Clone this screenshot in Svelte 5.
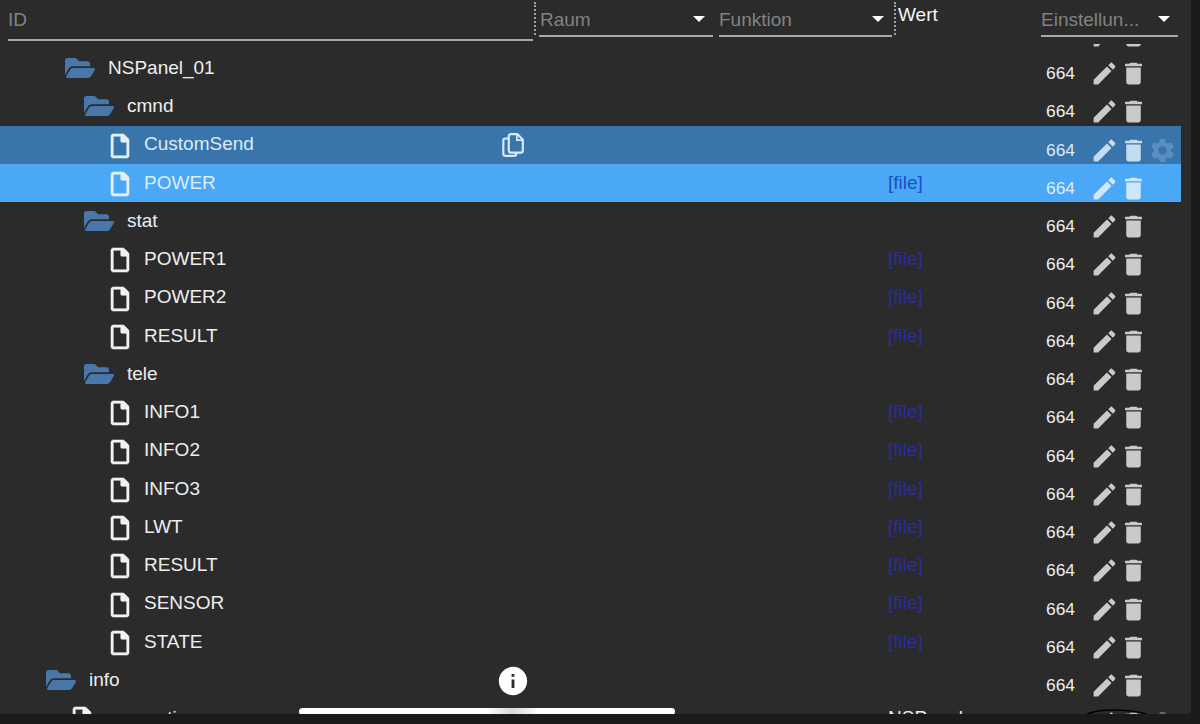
<script lang="ts">
  type Row = { name: string; kind: 'folder' | 'file'; depth: number; value?: string; tone?: string; gear?: boolean; copy?: boolean }

  const rows: Row[] = [
    { name: '', kind: 'folder', depth: 0 },
    { name: 'NSPanel_01', kind: 'folder', depth: 1 },
    { name: 'cmnd', kind: 'folder', depth: 2 },
    { name: 'CustomSend', kind: 'file', depth: 2, tone: 'hover', gear: true, copy: true },
    { name: 'POWER', kind: 'file', depth: 2, value: '[file]', tone: 'selected' },
    { name: 'stat', kind: 'folder', depth: 2 },
    { name: 'POWER1', kind: 'file', depth: 2, value: '[file]' },
    { name: 'POWER2', kind: 'file', depth: 2, value: '[file]' },
    { name: 'RESULT', kind: 'file', depth: 2, value: '[file]' },
    { name: 'tele', kind: 'folder', depth: 2 },
    { name: 'INFO1', kind: 'file', depth: 2, value: '[file]' },
    { name: 'INFO2', kind: 'file', depth: 2, value: '[file]' },
    { name: 'INFO3', kind: 'file', depth: 2, value: '[file]' },
    { name: 'LWT', kind: 'file', depth: 2, value: '[file]' },
    { name: 'RESULT', kind: 'file', depth: 2, value: '[file]' },
    { name: 'SENSOR', kind: 'file', depth: 2, value: '[file]' },
    { name: 'STATE', kind: 'file', depth: 2, value: '[file]' },
    { name: 'info', kind: 'folder', depth: 0 },
    { name: 'connection', kind: 'file', depth: 0, value: 'NSPanel', gear: true }
  ]

  const indent = (row: Row): number => (row.kind === 'folder' ? 46 : 72) + row.depth * 19
</script>

<div class="page">
  <header class="head">
    <div class="filter id-filter">ID</div>
    <span class="splitter"></span>
    <div class="filter select raum">Raum<i class="caret"></i></div>
    <div class="filter select funktion">Funktion<i class="caret"></i></div>
    <span class="splitter second"></span>
    <div class="wert">Wert</div>
    <div class="filter select settings-filter">Einstellun...<i class="caret"></i></div>
  </header>

  <div class="viewport">
    <div class="list">
      {#each rows as row}
        <div class="row {row.tone ?? ''}">
          <div class="name" style="padding-left: {indent(row)}px">
            {#if row.kind === 'folder'}
              <svg class="folder" viewBox="0 0 576 512">
                <path d="M572.694 292.093L500.27 416.248A63.997 63.997 0 0 1 444.989 448H45.025c-18.523 0-30.064-20.093-20.731-36.093l72.424-124.155A64 64 0 0 1 152 256h399.964c18.523 0 30.064 20.093 20.73 36.093zM152 224h328v-48c0-26.51-21.49-48-48-48H272l-64-64H48C21.49 64 0 85.49 0 112v278.046l69.077-118.418C86.214 242.25 117.989 224 152 224z" />
              </svg>
            {:else}
              <svg class="file" viewBox="0 0 384 512">
                <path d="M369.9 97.9L286 14C277 5 264.8-.1 252.1-.1H48C21.5 0 0 21.5 0 48v416c0 26.5 21.5 48 48 48h288c26.5 0 48-21.5 48-48V131.9c0-12.7-5.1-25-14.1-34zM332.1 128H256V51.9l76.1 76.1zM48 464V48h160v104c0 13.3 10.7 24 24 24h104v288H48z" />
                <path d="M250 40L344 134H250z" />
              </svg>
            {/if}
            <span class="label">{row.name}</span>
            {#if row.copy}
              <svg class="copy" viewBox="0 0 24 24" fill="none" stroke="currentColor" stroke-width="2">
                <path d="M9 17V4a2 2 0 0 1 2-2h6l5 5v10a2 2 0 0 1-2 2h-9a2 2 0 0 1-2-2z" />
                <path d="M16.5 2.5V7.5H21.5" stroke-width="1.6" />
                <path d="M9 6H6a2 2 0 0 0-2 2v12a2 2 0 0 0 2 2h8a2 2 0 0 0 2-2v-1" />
              </svg>
            {/if}
          </div>
          <div class="value" class:plain={row.value === 'NSPanel'}>{row.value ?? ''}</div>
          <div class="actions">
            <span class="num">{row.name ? '664' : ''}</span>
            <svg class="act" viewBox="0 0 24 24">
              <path d="M3 17.25V21h3.75L17.81 9.94l-3.75-3.75L3 17.25zM20.71 7.04c.39-.39.39-1.02 0-1.41l-2.34-2.34c-.39-.39-1.02-.39-1.41 0l-1.83 1.83 3.75 3.75 1.83-1.83z" />
            </svg>
            <svg class="act" viewBox="0 0 24 24">
              <path d="M6 19c0 1.1.9 2 2 2h8c1.1 0 2-.9 2-2V7H6v12zM19 4h-3.5l-1-1h-5l-1 1H5v2h14V4z" />
            </svg>
            {#if row.gear}
              <svg class="act gear" viewBox="0 0 24 24">
                <path d="M19.14 12.94c.04-.3.06-.61.06-.94 0-.32-.02-.64-.07-.94l2.03-1.58c.18-.14.23-.41.12-.61l-1.92-3.32c-.12-.22-.37-.29-.59-.22l-2.39.96c-.5-.38-1.03-.7-1.62-.94l-.36-2.54c-.04-.24-.24-.41-.48-.41h-3.84c-.24 0-.43.17-.47.41l-.36 2.54c-.59.24-1.13.57-1.62.94l-2.39-.96c-.22-.08-.47 0-.59.22L2.74 8.87c-.12.21-.08.47.12.61l2.03 1.58c-.05.3-.09.63-.09.94s.02.64.07.94l-2.03 1.58c-.18.14-.23.41-.12.61l1.92 3.32c.12.22.37.29.59.22l2.39-.96c.5.38 1.03.7 1.62.94l.36 2.54c.05.24.24.41.48.41h3.84c.24 0 .44-.17.47-.41l.36-2.54c.59-.24 1.13-.56 1.62-.94l2.39.96c.22.08.47 0 .59-.22l1.92-3.32c.12-.22.07-.47-.12-.61l-2.01-1.58zM12 15.6c-1.98 0-3.6-1.62-3.6-3.6s1.62-3.6 3.6-3.6 3.6 1.62 3.6 3.6-1.62 3.6-3.6 3.6z" />
              </svg>
            {/if}
          </div>
        </div>
      {/each}
    </div>
  </div>

  <svg class="info" viewBox="0 0 24 24">
    <path d="M12 2C6.48 2 2 6.48 2 12s4.48 10 10 10 10-4.48 10-10S17.52 2 12 2zm1 15h-2v-6h2v6zm0-8h-2V7h2v2z" />
  </svg>
  <div class="home-bar"></div>
  <svg class="arc" viewBox="0 0 80 16" fill="none">
    <path d="M1 16C10 5 22 2 38 2C50 2 62 3 72 6" stroke="#000" stroke-width="1.6" />
  </svg>
</div>

<style>
  :global(body) {
    background: #1b1b1b;
    overflow: hidden;
  }
  .page {
    position: relative;
    display: flex;
    flex-direction: column;
    width: 1191px;
    height: 714px;
    background: #2b2b2b;
    border-bottom-right-radius: 4px;
    font-family: "Liberation Sans", Arial, sans-serif;
    font-size: 19px;
    color: #eeeeee;
  }
  .head {
    display: flex;
    flex: none;
    height: 44px;
    box-sizing: border-box;
    padding-left: 8px;
  }
  .filter {
    box-sizing: border-box;
    color: #828282;
    line-height: 22px;
    padding-top: 9px;
  }
  .id-filter {
    width: 525px;
    height: 41px;
    border-bottom: 2px solid #a8a8a8;
  }
  .splitter {
    flex: none;
    width: 0;
    height: 33px;
    margin: 2px 2px 0 0.5px;
    border-left: 2px dotted #a0a0a0;
  }
  .splitter.second {
    margin-left: 2px;
  }
  .select {
    position: relative;
    height: 37px;
    padding-left: 1px;
    border-bottom: 2px solid #a8a8a8;
    white-space: nowrap;
  }
  .raum {
    width: 174px;
    margin-left: 1.5px;
  }
  .funktion {
    width: 173px;
    margin-left: 6px;
    padding-left: 0;
  }
  .caret {
    position: absolute;
    right: 8px;
    top: 16px;
    border-left: 6px solid transparent;
    border-right: 6px solid transparent;
    border-top: 6px solid #ffffff;
  }
  .wert {
    width: 143px;
    color: #f4f4f4;
    line-height: 22px;
    padding-top: 4px;
  }
  .settings-filter {
    width: 137px;
    padding-left: 0;
  }
  .viewport {
    flex: 1;
    min-height: 0;
    overflow: hidden;
  }
  .list {
    width: 1181px;
    margin-top: -33.15px;
  }
  .row {
    display: grid;
    grid-template-columns: 888px 158px 1fr;
    height: 38.25px;
    align-items: center;
  }
  .row.hover {
    background: #3975ab;
    color: #d9ebf9;
  }
  .row.selected {
    background: #4aa8f6;
    color: #dcedfb;
  }
  .name {
    display: flex;
    align-items: center;
    box-sizing: border-box;
    width: 525px;
    height: 100%;
    white-space: nowrap;
  }
  .label {
    padding-bottom: 1.4px;
  }
  .folder {
    flex: none;
    width: 30px;
    height: 30px;
    margin-right: 13px;
    margin-top: -1px;
    fill: #4a77aa;
  }
  .file {
    flex: none;
    width: 18px;
    height: 24px;
    margin: 1px 15px 0 1px;
    fill: #f2f2f2;
    stroke: #f2f2f2;
    stroke-width: 12;
    overflow: visible;
  }
  .hover .file,
  .selected .file {
    fill: #e4f1fb;
    stroke: #e4f1fb;
  }
  .copy {
    flex: none;
    width: 26px;
    height: 26px;
    margin-left: auto;
    color: #d5ebfa;
  }
  .value {
    color: #2a2d9c;
    padding-bottom: 1.4px;
  }
  .value.plain {
    color: #eeeeee;
  }
  .selected .value {
    color: #1a4fc6;
  }
  .actions {
    display: flex;
    align-items: center;
    padding-top: 10px;
    height: 100%;
    box-sizing: border-box;
  }
  .num {
    width: 43.5px;
    font-size: 17.4px;
  }
  .act {
    flex: none;
    width: 29px;
    height: 29px;
    fill: #cacaca;
  }
  .hover .act {
    fill: #c4dcf0;
  }
  .selected .act {
    fill: #cfe7fb;
  }
  .act.gear,
  .hover .act.gear {
    fill: #5a8fc1;
  }
  .row:not(.hover) .act.gear {
    fill: #666666;
  }
  .info {
    position: absolute;
    left: 496px;
    top: 664px;
    width: 34px;
    height: 34px;
    fill: #ffffff;
  }
  .home-bar {
    position: absolute;
    left: 299px;
    top: 708px;
    width: 376px;
    height: 7px;
    border-radius: 4px;
    background: linear-gradient(90deg, #ffffff 50%, #d8d8d8 56.5%, #ffffff 64%);
  }
  .arc {
    position: absolute;
    left: 1074px;
    top: 708px;
    width: 80px;
    height: 16px;
  }
</style>
